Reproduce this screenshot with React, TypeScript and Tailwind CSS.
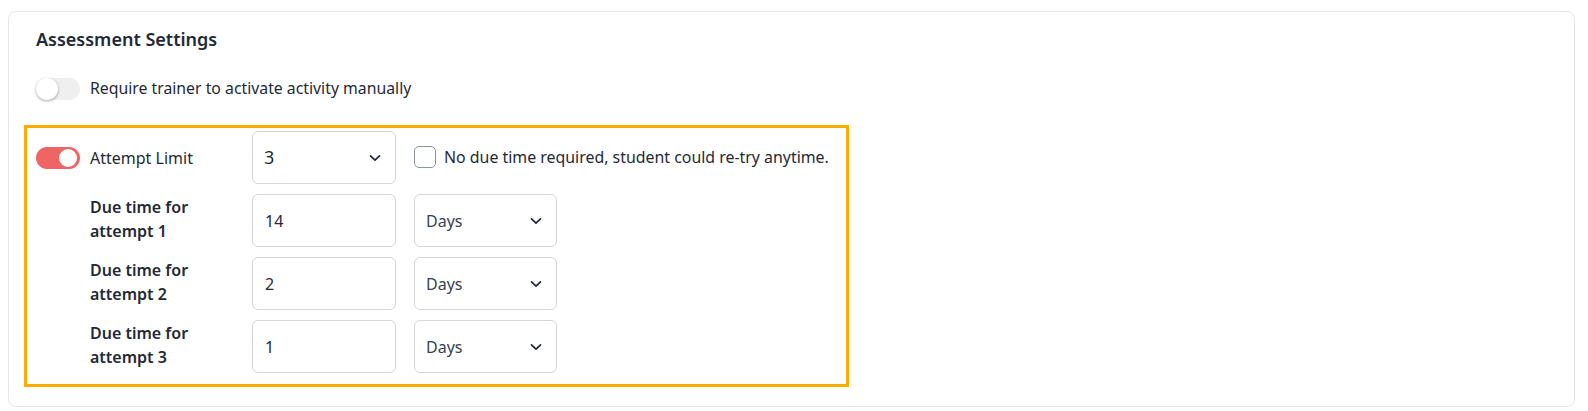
import React from "react";

type Attempt = { n: number; value: string; unit: string };

const attempts: Attempt[] = [
  { n: 1, value: "14", unit: "Days" },
  { n: 2, value: "2", unit: "Days" },
  { n: 3, value: "1", unit: "Days" },
];

function Chevron() {
  return (
    <svg width="12" height="8" viewBox="0 0 12 8" fill="none" className="shrink-0">
      <path d="M1.5 1.8 6 6.2l4.5-4.4" stroke="#1f2937" strokeWidth="1.7" strokeLinecap="round" strokeLinejoin="round" />
    </svg>
  );
}

function Toggle({ on }: { on: boolean }) {
  return (
    <span
      className={
        on
          ? "relative inline-flex h-[22px] w-[44px] shrink-0 rounded-full bg-[#ef6464]"
          : "relative inline-flex h-[22px] w-[44px] shrink-0 rounded-full bg-[#efefef]"
      }
    >
      <span
        className={
          on
            ? "absolute right-[3px] top-[2px] h-[18px] w-[18px] rounded-full bg-white"
            : "absolute left-0 top-[0px] h-[22px] w-[22px] rounded-full bg-white shadow-[0_1px_3px_rgba(0,0,0,0.35)]"
        }
      />
    </span>
  );
}

function SelectBox({ value, width, big }: { value: string; width: string; big?: boolean }) {
  return (
    <div
      className={`flex h-[53px] ${width} items-center justify-between rounded-md border border-[#d4d6dc] bg-white pl-[11px] pr-[14px]`}
    >
      <span className={big ? "text-[18px] text-[#1f2937]" : "text-[16px] text-[#374151]"}>{value}</span>
      <Chevron />
    </div>
  );
}

export default function App() {
  return (
    <div className="bg-white pl-2 pr-[13px] pt-[11px] font-['Noto_Sans',sans-serif]">
      <div className="rounded-lg border border-[#e6e7ea] bg-white px-[15px] pt-[15px] pb-[19px]">
        <h2 className="pl-[12px] text-[18px] font-semibold leading-6 text-[#1f2937]">Assessment Settings</h2>

        <div className="mt-[26px] flex h-6 items-center gap-[10px] pl-[12px]">
          <Toggle on={false} />
          <span className="text-[15.8px] text-[#1f2937]">Require trainer to activate activity manually</span>
        </div>

        <div className="mt-[24px] flex w-[825px] flex-col gap-[10px] border-[3px] border-[#ffab00] pb-[11px] pt-[3px]">
          <div className="flex h-[53px] items-center">
            <div className="flex w-[225px] items-center gap-[10px] pl-[9px]">
              <Toggle on />
              <span className="text-[16px] text-[#1f2937]">Attempt Limit</span>
            </div>
            <SelectBox value="3" width="w-[144px]" big />
            <label className="ml-[18px] flex items-center gap-[8px]">
              <span className="h-[22px] w-[22px] rounded-[5px] border-[1.5px] border-[#8b93a3] bg-white" />
              <span className="text-[15.9px] text-[#1f2937]">No due time required, student could re-try anytime.</span>
            </label>
          </div>

          {attempts.map((a) => (
            <div key={a.n} className="flex h-[53px] items-center">
              <div className="-mt-[3px] w-[225px] pl-[63px] text-[16px] font-semibold leading-6 text-[#1f2937]">
                Due time for
                <br />
                attempt {a.n}
              </div>
              <div className="flex h-[53px] w-[144px] items-center rounded-md border border-[#d4d6dc] bg-white pl-[12px] text-[16px] text-[#1f2937]">
                {a.value}
              </div>
              <div className="ml-[18px]">
                <SelectBox value={a.unit} width="w-[143px]" />
              </div>
            </div>
          ))}
        </div>
      </div>
    </div>
  );
}
